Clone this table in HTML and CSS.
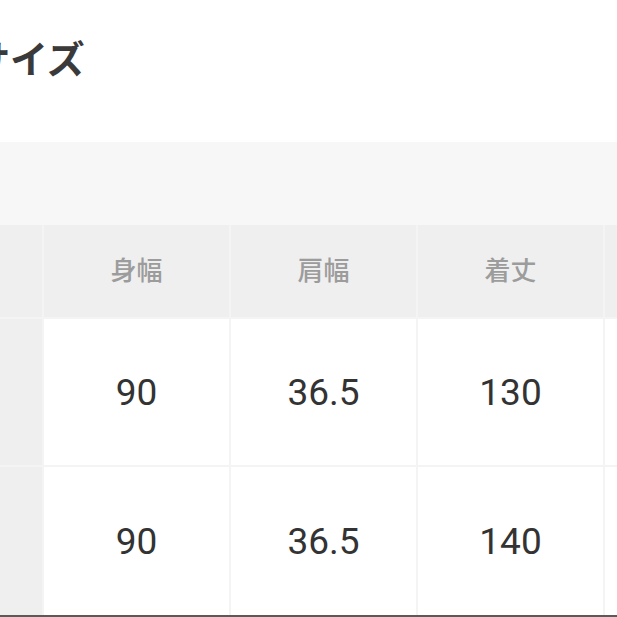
FILE: index.html
```html
<!DOCTYPE html>
<html lang="ja">
<head>
<meta charset="utf-8">
<link rel="stylesheet" href="styles.css">
</head>
<body>
<div class="page">
  <div class="title-area"><h1 class="title">サイズ</h1></div>
  <div class="band"></div>
  <div class="size-table">
    <div class="cell head side"></div>
    <div class="cell head">身幅</div>
    <div class="cell head">肩幅</div>
    <div class="cell head">着丈</div>
    <div class="cell head"></div>

    <div class="cell side"></div>
    <div class="cell val">90</div>
    <div class="cell val">36.5</div>
    <div class="cell val">130</div>
    <div class="cell val"></div>

    <div class="cell side"></div>
    <div class="cell val">90</div>
    <div class="cell val">36.5</div>
    <div class="cell val">140</div>
    <div class="cell val"></div>
  </div>
  <div class="bottom-bar"></div>
</div>
</body>
</html>
```
FILE: styles.css
```css
html, body {
  margin: 0;
  padding: 0;
  background: #ffffff;
  overflow: hidden;
}
.page {
  width: 617px;
  height: 617px;
  display: flex;
  flex-direction: column;
  overflow: hidden;
}
.title-area {
  height: 142px;
  box-sizing: border-box;
  padding-top: 35px;
}
.title {
  margin: 0 0 0 -28px;
  font-family: "Noto Sans CJK JP", "Noto Sans", sans-serif;
  font-size: 38px;
  line-height: 44px;
  font-weight: 700;
  color: #3a3a3a;
}
.band {
  height: 83px;
  background: #f7f7f7;
}
.size-table {
  display: grid;
  grid-template-columns: 42px 185px 185px 185px 1fr;
  grid-template-rows: 92px 146px 148px;
  gap: 2px;
  background: #f4f4f4;
}
.cell {
  display: flex;
  align-items: center;
  justify-content: center;
}
.head {
  background: #efefef;
  font-family: "Noto Sans CJK JP", "Noto Sans", sans-serif;
  font-size: 26px;
  font-weight: 500;
  color: #9c9c9c;
  padding-bottom: 5px;
}
.side {
  background: #efefef;
}
.val {
  background: #ffffff;
  font-family: Roboto, "Noto Sans", sans-serif;
  font-size: 37px;
  color: #333333;
}
.bottom-bar {
  height: 2px;
  background: #5a5a5a;
}
```
